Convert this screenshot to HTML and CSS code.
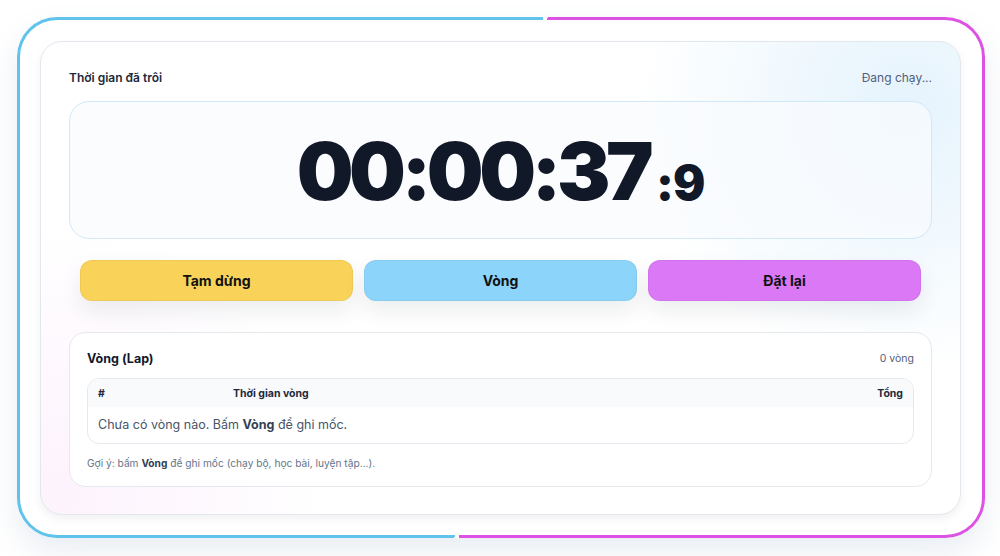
FILE: index.html
```html
<!DOCTYPE html>
<html lang="vi">
<head>
  <meta charset="UTF-8" />
  <meta name="viewport" content="width=device-width, initial-scale=1.0"/>
  <title>Bấm giờ</title>
  <link rel="stylesheet" href="styles.css">
</head>
<body>
  <div class="frame">
    <div class="card">
      <div class="card-head">
        <span class="label">Thời gian đã trôi</span>
        <span class="status">Đang chạy...</span>
      </div>

      <div class="timer-box">
        <div class="timer">00:00:37<span class="tenths">:9</span></div>
      </div>

      <div class="actions">
        <button class="btn btn-pause">Tạm dừng</button>
        <button class="btn btn-lap">Vòng</button>
        <button class="btn btn-reset">Đặt lại</button>
      </div>

      <div class="laps">
        <div class="laps-head">
          <span class="laps-title">Vòng (Lap)</span>
          <span class="laps-count">0 vòng</span>
        </div>
        <div class="lap-table">
          <div class="lap-row lap-row-head">
            <span>#</span>
            <span>Thời gian vòng</span>
            <span class="right">Tổng</span>
          </div>
          <div class="lap-empty">Chưa có vòng nào. Bấm <strong>Vòng</strong> để ghi mốc.</div>
        </div>
        <p class="hint">Gợi ý: bấm <strong>Vòng</strong> để ghi mốc (chạy bộ, học bài, luyện tập...).</p>
      </div>
    </div>
  </div>
</body>
</html>
```

FILE: styles.css
```css
* { box-sizing: border-box; }

body {
  margin: 0;
  padding: 17px 15px 18px 17px;
  background: #fff;
  font-family: Inter, 'Noto Sans', sans-serif;
  color: #0f172a;
}

.frame {
  width: 968px;
  height: 521px;
  padding: 21px 21px 20px 20px;
  border: 3px solid transparent;
  border-radius: 40px;
  background:
    linear-gradient(#fff, #fff) padding-box,
    linear-gradient(99.7deg, #5fc3ec 0 49.8%, #fff 49.8% 50.2%, #dc52e2 50.2%) border-box;
  box-shadow: 0 14px 30px rgba(100, 130, 170, 0.14);
}

.card {
  height: 100%;
  padding: 26px 28px 28px;
  border: 1px solid #e3e8ee;
  border-radius: 22px;
  background:
    radial-gradient(circle at 94% 14%, rgba(220, 239, 252, 0.75), rgba(220, 239, 252, 0) 28%),
    radial-gradient(circle at 2% 95%, rgba(252, 234, 252, 0.6), rgba(252, 234, 252, 0) 26%),
    #fff;
  box-shadow: 0 4px 10px rgba(15, 23, 42, 0.06);
}

.card-head {
  display: flex;
  justify-content: space-between;
  align-items: center;
  height: 18px;
  margin-bottom: 15px;
}

.label {
  font-size: 12px;
  font-weight: 600;
  color: #1e293b;
}

.status {
  font-size: 12px;
  color: #52607a;
}

.timer-box {
  height: 138px;
  display: flex;
  align-items: center;
  justify-content: center;
  border: 1px solid #d3e8f6;
  border-radius: 20px;
  background: rgba(248, 251, 253, 0.75);
}

.timer {
  font-size: 80px;
  font-weight: 900;
  letter-spacing: -4.5px;
  color: #111827;
  line-height: 1;
  padding-top: 2px;
}

.tenths {
  font-size: 48px;
  font-weight: 900;
  letter-spacing: -1px;
  margin-left: 7px;
}

.actions {
  display: grid;
  grid-template-columns: repeat(3, 1fr);
  gap: 11px;
  padding: 0 11px;
  margin-top: 21px;
}

.btn {
  height: 41px;
  border: 1px solid rgba(0, 0, 0, 0.04);
  border-radius: 12px;
  font-family: inherit;
  font-size: 14px;
  font-weight: 700;
  color: #111;
  cursor: pointer;
  box-shadow: 0 10px 22px rgba(15, 23, 42, 0.08);
}

.btn-pause { background: #f9d25a; }
.btn-lap { background: #8dd4fb; }
.btn-reset { background: #da78f6; }

.laps {
  margin-top: 31px;
  padding: 16px 17px 16px 17px;
  border: 1px solid #e5e8ed;
  border-radius: 16px;
  background: #fff;
}

.laps-head {
  display: flex;
  justify-content: space-between;
  align-items: center;
  height: 18px;
  margin-bottom: 11px;
}

.laps-title {
  font-size: 12.5px;
  font-weight: 700;
  color: #0f172a;
}

.laps-count {
  font-size: 10.5px;
  color: #52607a;
}

.lap-table {
  border: 1px solid #e5e9ef;
  border-radius: 12px;
  overflow: hidden;
}

.lap-row {
  display: grid;
  grid-template-columns: 135px 1fr auto;
  padding: 0 10px;
}

.lap-row-head {
  height: 28px;
  align-items: center;
  background: #f8fafc;
  font-size: 10.5px;
  font-weight: 700;
  color: #1e293b;
}

.right { text-align: right; }

.lap-empty {
  padding: 9px 10px 10px;
  line-height: 17px;
  font-size: 12.5px;
  color: #475569;
}

.lap-empty strong { color: #334155; }

.hint {
  margin: 12px 0 0;
  font-size: 10.2px;
  line-height: 14px;
  color: #64748b;
}

.hint strong { color: #334155; }
```
